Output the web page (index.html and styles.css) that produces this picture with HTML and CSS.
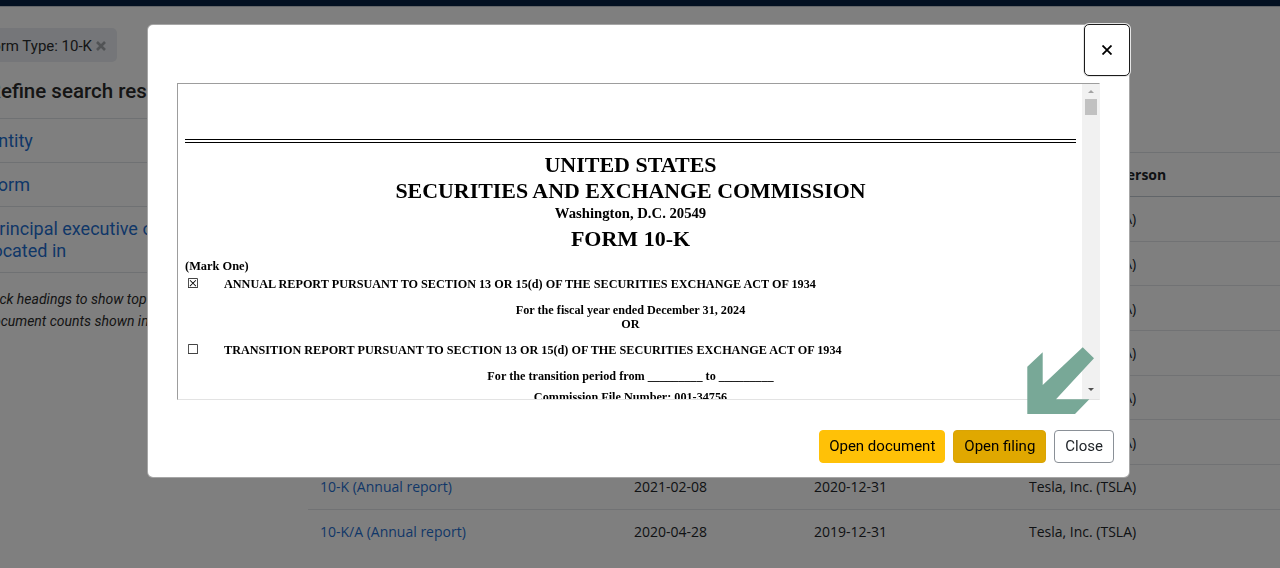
FILE: index.html
```html
<!DOCTYPE html>
<html lang="en">
<head>
<meta charset="utf-8">
<title>EDGAR Full-Text Search – Form 10-K</title>
<link rel="stylesheet" href="styles.css">
</head>
<body>
<header class="topbar"></header>
<div class="page">
  <aside class="sidebar">
    <div class="chip">Form Type: 10-K
      <svg class="chip-x" viewBox="0 0 10 10" width="10" height="10" aria-hidden="true"><path d="M1 1L9 9M9 1L1 9" stroke="currentColor" stroke-width="2.6" stroke-linecap="butt"/></svg>
    </div>
    <h2 class="refine">Refine search results</h2>
    <ul class="facets">
      <li><a href="#">Entity</a></li>
      <li><a href="#">Form</a></li>
      <li><a href="#">Principal executive offices located in</a></li>
    </ul>
    <p class="hint"><span>Click headings to show top filter values.</span><span>Document counts shown in parentheses.</span></p>
  </aside>
  <main class="results">
    <table class="hits">
      <colgroup><col class="c1"><col class="c2"><col class="c3"><col class="c4"></colgroup>
      <thead>
        <tr><th>Form &amp; File</th><th>Filed</th><th>Reporting for</th><th>Filing entity/person</th></tr>
      </thead>
      <tbody>
        <tr><td><a href="#">10-K (Annual report)</a></td><td>2025-01-30</td><td>2024-12-31</td><td>Tesla, Inc. (TSLA)</td></tr>
        <tr><td><a href="#">10-K/A (Annual report)</a></td><td>2024-04-29</td><td>2023-12-31</td><td>Tesla, Inc. (TSLA)</td></tr>
        <tr><td><a href="#">10-K (Annual report)</a></td><td>2024-01-29</td><td>2023-12-31</td><td>Tesla, Inc. (TSLA)</td></tr>
        <tr><td><a href="#">10-K (Annual report)</a></td><td>2023-01-31</td><td>2022-12-31</td><td>Tesla, Inc. (TSLA)</td></tr>
        <tr><td><a href="#">10-K/A (Annual report)</a></td><td>2022-05-02</td><td>2021-12-31</td><td>Tesla, Inc. (TSLA)</td></tr>
        <tr><td><a href="#">10-K (Annual report)</a></td><td>2022-02-07</td><td>2021-12-31</td><td>Tesla, Inc. (TSLA)</td></tr>
        <tr><td><a href="#">10-K (Annual report)</a></td><td>2021-02-08</td><td>2020-12-31</td><td>Tesla, Inc. (TSLA)</td></tr>
        <tr><td><a href="#">10-K/A (Annual report)</a></td><td>2020-04-28</td><td>2019-12-31</td><td>Tesla, Inc. (TSLA)</td></tr>
      </tbody>
    </table>
  </main>
</div>

<div class="backdrop"></div>

<div class="modal" role="dialog" aria-label="Document preview">
  <div class="modal-header">
    <button class="close-x" aria-label="Close">
      <svg viewBox="0 0 10 10" width="10" height="10" aria-hidden="true"><path d="M0.5 0.5L9.5 9.5M9.5 0.5L0.5 9.5" stroke="#000" stroke-width="1.8"/></svg>
    </button>
  </div>
  <div class="modal-body">
    <div class="frame">
      <div class="doc">
        <div class="rule"></div>
        <div class="t-united">UNITED STATES</div>
        <div class="t-sec">SECURITIES AND EXCHANGE COMMISSION</div>
        <div class="t-wash">Washington, D.C. 20549</div>
        <div class="t-form">FORM 10-K</div>
        <div class="mark">(Mark One)</div>
        <div class="opt opt-first"><span class="box">☒</span><span>ANNUAL REPORT PURSUANT TO SECTION 13 OR 15(d) OF THE SECURITIES EXCHANGE ACT OF 1934</span></div>
        <div class="line gap">For the fiscal year ended December 31, 2024</div>
        <div class="line">OR</div>
        <div class="opt gap"><span class="box">☐</span><span>TRANSITION REPORT PURSUANT TO SECTION 13 OR 15(d) OF THE SECURITIES EXCHANGE ACT OF 1934</span></div>
        <div class="line gap">For the transition period from _________ to _________</div>
        <div class="line small-gap">Commission File Number: 001-34756</div>
      </div>
      <div class="vscroll">
        <span class="arr-up"></span>
        <span class="thumb"></span>
        <span class="track"></span>
        <span class="arr-down"></span>
      </div>
    </div>
  </div>
  <div class="modal-footer">
    <button class="btn btn-doc">Open document</button>
    <button class="btn btn-filing">Open filing</button>
    <button class="btn btn-close">Close</button>
  </div>
</div>

<svg class="pointer" viewBox="0 0 70 70" width="70" height="70" aria-hidden="true">
  <polygon points="1.3,20.7 16.7,6.3 16.7,39 56.7,1.3 68,12.3 30,53.3 63.3,53.3 49,68 1.3,68" fill="#78a897"/>
</svg>
</body>
</html>
```

FILE: styles.css
```css
* { box-sizing: border-box; }

html, body {
  margin: 0;
  padding: 0;
}

body {
  width: 1280px;
  height: 568px;
  overflow: hidden;
  background: #fff;
  color: #212529;
  font-family: Roboto, "Open Sans", "Liberation Sans", Arial, sans-serif;
}

a { color: #1f6fd1; text-decoration: none; }

/* ---------- background page ---------- */
.topbar {
  height: 7px;
  background: #062142;
  border-bottom: 1px solid #c8ccd2;
}

.page {
  display: flex;
  align-items: flex-start;
}

.sidebar {
  flex: 0 0 320px;
  margin-left: -24px;
  padding-top: 21px;
}

.chip {
  display: inline-flex;
  align-items: center;
  height: 34px;
  padding: 1px 11px 0 8px;
  background: #eaedf2;
  border-radius: 5px;
  font-size: 15px;
  color: #2a2c2e;
}

.chip-x {
  margin-left: 4px;
  color: #a2a6ab;
}

.refine {
  margin: 17px 0 15px;
  padding-left: 12px;
  font-size: 20.5px;
  line-height: 24px;
  font-weight: 500;
  color: #2b2b2b;
}

.facets {
  list-style: none;
  margin: 0;
  padding: 0;
  border-bottom: 1px solid #dee2e6;
}

.facets li {
  border-top: 1px solid #dee2e6;
  padding: 10.5px 66px 10.5px 12px;
  font-size: 18px;
  line-height: 22px;
}

.hint {
  margin: 15px 0 0;
  padding-left: 8px;
  font-size: 14px;
  line-height: 22px;
  font-style: italic;
  color: #2b2b2b;
}

.hint span { display: block; }

.results {
  flex: 1;
  min-width: 0;
  padding: 145px 0 0 12px;
  overflow: hidden;
}

.hits {
  width: 992px;
  border-collapse: collapse;
  table-layout: fixed;
  font-family: "Open Sans", Roboto, Arial, sans-serif;
  font-size: 14px;
}

.c1 { width: 314px; }
.c2 { width: 180px; }
.c3 { width: 215px; }
.c4 { width: 283px; }

.hits th {
  text-align: left;
  font-weight: 700;
  padding: 11px 12px;
  line-height: 21px;
  border-top: 1px solid #dee2e6;
  border-bottom: 1px solid #c3cad2;
}

.hits td {
  padding: 11.35px 12px;
  line-height: 21px;
  border-bottom: 1px solid #e2e5e8;
  white-space: nowrap;
}

.hits tbody tr:last-child td { border-bottom: 0; }

/* ---------- modal ---------- */
.backdrop {
  position: fixed;
  inset: 0;
  background: rgba(0, 0, 0, 0.5);
}

.modal {
  position: fixed;
  left: 147px;
  top: 24px;
  width: 983px;
  background: #fff;
  border: 1px solid rgba(0, 0, 0, 0.35);
  border-radius: 6px;
}

.modal-header {
  display: flex;
  justify-content: flex-end;
}

.close-x {
  width: 46px;
  height: 52px;
  margin: -1px -1px 0 0;
  padding: 0;
  display: flex;
  align-items: center;
  justify-content: center;
  background: #fff;
  border: 1px solid #1b1b1b;
  border-radius: 5px;
  box-shadow: 0 0 0 1px #e6e6e6;
}

.modal-body {
  padding: 7px 29px 0;
}

.frame {
  height: 317px;
  display: flex;
  border: 1px solid;
  border-color: #9d9d9d #f1f1f1 #e3e3e3 #9d9d9d;
  overflow: hidden;
}

.doc {
  flex: 1;
  min-width: 0;
  padding: 0 6px 0 7px;
  font-family: "Liberation Serif", "Times New Roman", serif;
  font-weight: 700;
  color: #000;
  overflow: hidden;
  text-align: center;
}

.rule {
  margin-top: 55px;
  border-top: 4px double #000;
}

.t-united { margin-top: 9px; font-size: 22px; line-height: 26px; }
.t-sec    { font-size: 21.9px; line-height: 26px; }
.t-wash   { font-size: 14.7px; line-height: 18px; }
.t-form   { margin-top: 4px; font-size: 22px; line-height: 26px; }

.mark {
  margin-top: 7px;
  text-align: left;
  font-size: 12.4px;
  line-height: 14px;
}

.opt {
  display: flex;
  align-items: center;
  height: 14px;
  text-align: left;
  font-size: 12.2px;
  line-height: 14px;
}

.opt-first { margin-top: 4px; }

.box {
  flex: 0 0 39px;
  padding-left: 2px;
  font-family: "DejaVu Sans", sans-serif;
  font-weight: 700;
  font-size: 13px;
  line-height: 14px;
}

.line {
  font-size: 12.2px;
  line-height: 14px;
}

.gap { margin-top: 12px; }
.opt.gap { margin-top: 12px; }
.small-gap { margin-top: 7px; }

.vscroll {
  flex: 0 0 17px;
  display: flex;
  flex-direction: column;
  align-items: center;
  background: #f1f1f1;
}

.arr-up {
  margin-top: 6px;
  width: 0;
  height: 0;
  border-left: 3.5px solid transparent;
  border-right: 3.5px solid transparent;
  border-bottom: 3.5px solid #a3a3a3;
}

.thumb {
  margin-top: 5.5px;
  width: 12px;
  height: 16px;
  background: #c1c1c1;
}

.track { flex: 1; }

.arr-down {
  margin-bottom: 8px;
  width: 0;
  height: 0;
  border-left: 3.5px solid transparent;
  border-right: 3.5px solid transparent;
  border-top: 3.5px solid #505050;
}

.modal-footer {
  display: flex;
  justify-content: flex-end;
  gap: 8px;
  padding: 30px 15px 14px;
}

.btn {
  height: 33px;
  padding: 5px 10px;
  font-family: Roboto, "Open Sans", Arial, sans-serif;
  font-size: 15px;
  line-height: 21px;
  color: #000;
  border: 1px solid transparent;
  border-radius: 4px;
}

.btn-doc { background: #ffc107; border-color: #ffc107; padding: 5px 9px; }
.btn-filing { background: #e0a800; border-color: #d9a406; }
.btn-close { background: #fff; border-color: #8a9097; color: #212529; }

/* annotation arrow over the modal */
.pointer {
  position: fixed;
  left: 1026px;
  top: 346px;
}
```
